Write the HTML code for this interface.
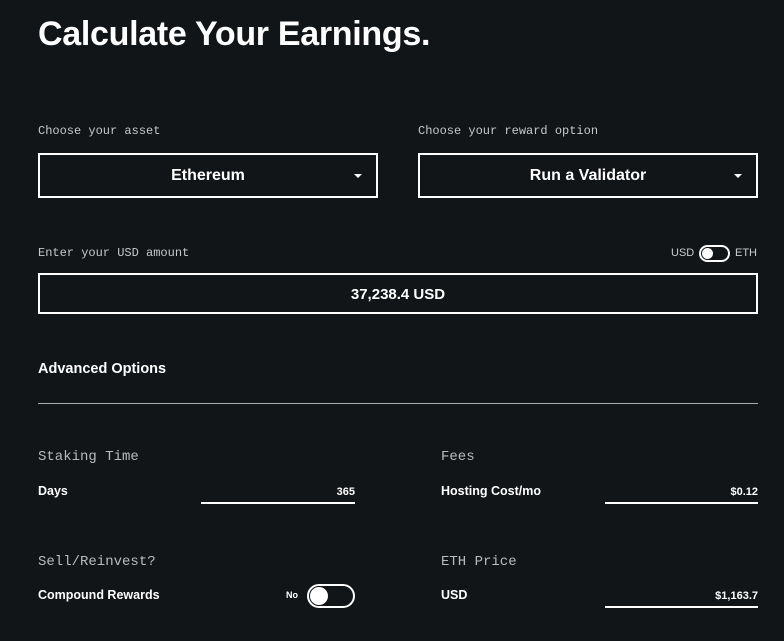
<!DOCTYPE html>
<html><head><style>
body{margin:0;width:784px;height:641px;background:#111518;color:#fff;font-family:"Liberation Sans",sans-serif;position:relative;overflow:hidden}
.a{position:absolute;white-space:nowrap}
.t{left:38px;top:15px;font-size:34px;font-weight:bold;letter-spacing:-0.3px}
.m{font-family:"Liberation Mono",monospace;font-size:12px;color:#c8c8c8}
.m2{font-family:"Liberation Mono",monospace;font-size:14px;color:#bbb}
.box{position:absolute;border:2px solid #fff;box-sizing:border-box;display:flex;align-items:center;justify-content:center;font-weight:bold;font-size:16px}
.arr{position:absolute;right:14px;top:19px;width:0;height:0;border-left:4px solid transparent;border-right:4px solid transparent;border-top:4px solid #fff}
.b{font-weight:bold;font-size:12.5px}
.ul{position:absolute;height:2px;background:#fff}
.v{font-weight:bold;font-size:11px;text-align:right}
</style></head><body>
<div class="a t">Calculate Your Earnings.</div>
<div class="a m" style="left:38px;top:124px">Choose your asset</div>
<div class="a m" style="left:418px;top:124px">Choose your reward option</div>
<div class="box" style="left:38px;top:153px;width:340px;height:45px">Ethereum<div class="arr"></div></div>
<div class="box" style="left:418px;top:153px;width:340px;height:45px">Run a Validator<div class="arr"></div></div>
<div class="a m" style="left:38px;top:246px">Enter your USD amount</div>
<div class="a" style="left:671px;top:247px;font-size:11px;color:#ccc">USD</div>
<div class="a" style="left:699px;top:245px;width:31px;height:17px;box-sizing:border-box;border:2px solid #fff;border-radius:9px"><div style="position:absolute;left:1px;top:1px;width:11px;height:11px;border-radius:50%;background:#fff"></div></div>
<div class="a" style="left:735px;top:247px;font-size:11px;color:#ccc">ETH</div>
<div class="box" style="left:38px;top:273px;width:720px;height:41px;font-size:15px;padding-top:2px">37,238.4 USD</div>
<div class="a" style="left:38px;top:361px;font-size:14.5px;font-weight:bold">Advanced Options</div>
<div class="a" style="left:38px;top:403px;width:720px;height:1px;background:#aaa"></div>
<div class="a m2" style="left:38px;top:449px">Staking Time</div>
<div class="a b" style="left:38px;top:484px">Days</div>
<div class="a v" style="left:201px;top:486px;width:154px">365</div>
<div class="ul" style="left:201px;top:502px;width:154px"></div>
<div class="a m2" style="left:441px;top:449px">Fees</div>
<div class="a b" style="left:441px;top:484px">Hosting Cost/mo</div>
<div class="a v" style="left:605px;top:486px;width:153px">$0.12</div>
<div class="ul" style="left:605px;top:502px;width:153px"></div>
<div class="a m2" style="left:38px;top:554px">Sell/Reinvest?</div>
<div class="a b" style="left:38px;top:588px">Compound Rewards</div>
<div class="a" style="left:286px;top:590px;font-size:9px;font-weight:bold">No</div>
<div class="a" style="left:307px;top:584px;width:48px;height:24px;box-sizing:border-box;border:2px solid #fff;border-radius:12px"><div style="position:absolute;left:1px;top:1px;width:18px;height:18px;border-radius:50%;background:#fff"></div></div>
<div class="a m2" style="left:441px;top:554px">ETH Price</div>
<div class="a b" style="left:441px;top:588px">USD</div>
<div class="a v" style="left:605px;top:590px;width:153px">$1,163.7</div>
<div class="ul" style="left:605px;top:606px;width:153px"></div>
</body></html>
